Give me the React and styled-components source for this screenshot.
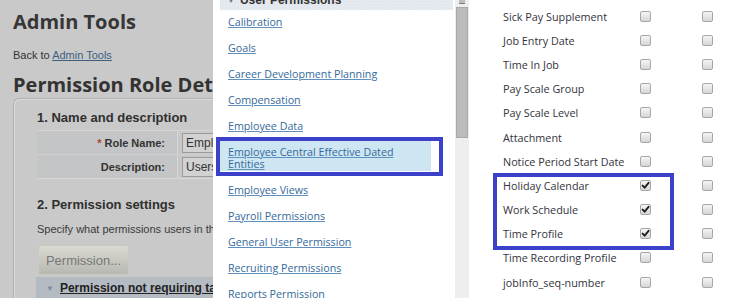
import React from "react";
import styled, { createGlobalStyle } from "styled-components";

const GlobalStyle = createGlobalStyle`
  html, body { margin: 0; padding: 0; }
  body { background: #fff; font-family: "Open Sans", "DejaVu Sans", sans-serif; }
  #root { width: 745px; height: 298px; }
`;

const Screen = styled.div`
  display: flex;
  width: 745px;
  height: 298px;
  overflow: hidden;
`;

/* ---------- dimmed page behind the dialog ---------- */
const Backdrop = styled.div`
  flex: 0 0 213px;
  box-sizing: border-box;
  padding: 12px 0 0 13px;
  background: #c9c9c9;
  color: #343434;
  overflow: hidden;
  white-space: nowrap;
`;

const PageTitle = styled.h1`
  margin: 0;
  font: 700 20px/20px "Open Sans", sans-serif;
  color: #363636;
`;

const BackLine = styled.div`
  margin-top: 17px;
  font: 11px/13px "Liberation Sans", Arial, sans-serif;
  color: #333;
`;

const BackLink = styled.a`
  color: #3d5f80;
  text-decoration: underline;
`;

const RoleTitle = styled.h2`
  margin: 12px 0 0;
  font: 700 20px/22px "Open Sans", sans-serif;
  color: #333;
`;

const Card = styled.div`
  margin-top: 2px;
  width: 260px;
  box-sizing: border-box;
  border: 1px solid #b2b2b2;
  border-right: none;
  border-radius: 6px 0 0 0;
  box-shadow: inset 1px 1px 0 #dadada;
  padding: 11px 0 0 23px;
`;

const StepTitle = styled.h3`
  margin: ${(p) => p.$gap || "0"} 0 0;
  font: 700 13px/16px "Liberation Sans", Arial, sans-serif;
  color: #2f2f2f;
`;

const FormTable = styled.div`
  margin-top: 4px;
  border-top: 1px solid #d4d4d4;
  border-bottom: 1px solid #d8d8d8;
`;

const FormRow = styled.div`
  display: grid;
  grid-template-columns: 141px 1fr;
  height: 23px;
  & + & { border-top: 1px solid #cfcfcf; }
`;

const FieldLabel = styled.div`
  display: flex;
  align-items: center;
  justify-content: flex-end;
  padding-right: 12px;
  font: 700 11px "Liberation Sans", Arial, sans-serif;
  color: #333;
  background-color: #c3c5c6;
  background-image: radial-gradient(#cbcdce 0.6px, transparent 0.7px);
  background-size: 2px 2px;
  border-right: 1px solid #d6d6d6;
`;

const Required = styled.span`
  color: #b04040;
  margin-right: 3px;
`;

const FieldCell = styled.div`
  display: flex;
  align-items: center;
  padding-left: 4px;
  background: #c6c8c9;
`;

const TextInput = styled.div`
  width: 80px;
  height: 20px;
  box-sizing: border-box;
  padding: 2px 0 0 3px;
  border: 1px solid #9c9c9c;
  background: #d2d2d2;
  font: 12px/15px "Liberation Sans", Arial, sans-serif;
  color: #333;
`;

const Hint = styled.p`
  margin: 10px 0 0;
  font: 11px/13px "Liberation Sans", Arial, sans-serif;
  color: #3a3a3a;
`;

const GhostButton = styled.div`
  margin: 9px 0 0 1px;
  width: 91px;
  height: 30px;
  box-sizing: border-box;
  display: flex;
  align-items: center;
  justify-content: center;
  border: 1px solid #c9c9bd;
  border-radius: 3px;
  background: linear-gradient(#dadad2, #b8b8b2);
  font: 13px "Liberation Sans", Arial, sans-serif;
  color: #777;
`;

const GroupBar = styled.div`
  margin: 2px 0 0 -1px;
  height: 22px;
  display: flex;
  align-items: center;
  gap: 6px;
  padding-left: 10px;
  background: #b4bbc2;
  font: 700 12px "Liberation Sans", Arial, sans-serif;
  color: #222;
`;

const Caret = styled.span`
  font-size: 8px;
  color: ${(p) => p.$color || "#7d8a96"};
`;

const BarLink = styled.span`
  text-decoration: underline;
`;

/* ---------- dialog: permission list ---------- */
const Dialog = styled.div`
  flex: 0 0 257px;
  display: flex;
  background: #fff;
`;

const ListPane = styled.div`
  flex: 1;
  min-width: 0;
  padding: 0 2px 0 7px;
  overflow: hidden;
`;

const ListHeader = styled.div`
  margin-top: -10px;
  height: 20px;
  display: flex;
  align-items: center;
  gap: 5px;
  padding-left: 7px;
  background-color: #e2e8ee;
  background-image: radial-gradient(#eaeff4 0.6px, transparent 0.7px);
  background-size: 3px 3px;
  font: 700 12px "Liberation Sans", Arial, sans-serif;
  color: #333;
`;

const LinkList = styled.ul`
  list-style: none;
  margin: 0;
  padding: 0;
`;

const LinkItem = styled.li`
  position: relative;
  padding: ${(p) => (p.$active ? "6px 8px 1px 8px" : "6px 0 8px 8px")};
  margin: ${(p) => (p.$active ? "0 22px 7px 0" : "0")};
  background: ${(p) => (p.$active ? "#cde6f2" : "transparent")};
  font: 10.7px/12px "Open Sans", sans-serif;
`;

const PermLink = styled.a`
  color: #35699b;
  text-decoration: underline;
  text-decoration-color: #5f8fbd;
  text-underline-offset: 1px;
`;

const Frame = styled.div`
  position: absolute;
  box-sizing: border-box;
  inset: ${(p) => p.$inset};
  width: ${(p) => p.$width || "auto"};
  border: 4px solid #3b41c9;
  pointer-events: none;
`;

const Scrollbar = styled.div`
  flex: 0 0 14px;
  margin-right: 1px;
  display: flex;
  flex-direction: column;
  background: #eeeeee;
`;

const ScrollArrow = styled.div`
  height: 3px;
  margin: 0 4px;
  background: #bdbdbd;
  border-bottom: 1px solid #7a7a7a;
`;

const ScrollThumb = styled.div`
  margin: 3px 1px 0;
  height: 131px;
  box-sizing: border-box;
  background: #bcbcbc;
  border: 1px solid #a9a9a9;
`;

/* ---------- dialog: field permissions ---------- */
const FieldPanel = styled.div`
  flex: 1;
  background: #fff;
  padding: 4px 0 0 33px;
  overflow: hidden;
`;

const FieldRow = styled.div`
  display: grid;
  grid-template-columns: 137px 62px 12px;
  align-items: center;
  height: 24.2px;
  font: 10.8px "Open Sans", sans-serif;
  color: #33333d;
  white-space: nowrap;
`;

const Group = styled.div`
  position: relative;
`;

const Box = styled.span`
  width: 11px;
  height: 11px;
  box-sizing: border-box;
  display: flex;
  align-items: center;
  justify-content: center;
  border: 1px solid #a7a7a7;
  border-radius: 2px;
  background: linear-gradient(#f5f5f5, #d6d6d6);
`;

function Checkbox({ checked }) {
  return (
    <Box>
      {checked && (
        <svg width="9" height="9" viewBox="0 0 9 9">
          <path d="M1.6 4.6 L3.6 6.7 L7.6 1.8" fill="none" stroke="#1f1f1f" strokeWidth="1.9" strokeLinecap="round" strokeLinejoin="round" />
        </svg>
      )}
    </Box>
  );
}

const links = [
  "Calibration",
  "Goals",
  "Career Development Planning",
  "Compensation",
  "Employee Data",
  "Employee Central Effective Dated Entities",
  "Employee Views",
  "Payroll Permissions",
  "General User Permission",
  "Recruiting Permissions",
  "Reports Permission",
];

const fieldsBefore = [
  "Sick Pay Supplement",
  "Job Entry Date",
  "Time In Job",
  "Pay Scale Group",
  "Pay Scale Level",
  "Attachment",
  "Notice Period Start Date",
];
const fieldsChecked = ["Holiday Calendar", "Work Schedule", "Time Profile"];
const fieldsAfter = ["Time Recording Profile", "jobInfo_seq-number"];

function Field({ label, checked }) {
  return (
    <FieldRow>
      <span>{label}</span>
      <Checkbox checked={checked} />
      <Checkbox />
    </FieldRow>
  );
}

export default function App() {
  return (
    <>
      <GlobalStyle />
      <Screen>
        <Backdrop>
          <PageTitle>Admin Tools</PageTitle>
          <BackLine>
            Back to <BackLink>Admin Tools</BackLink>
          </BackLine>
          <RoleTitle>Permission Role Details</RoleTitle>
          <Card>
            <StepTitle>1. Name and description</StepTitle>
            <FormTable>
              <FormRow>
                <FieldLabel>
                  <Required>*</Required>Role Name:
                </FieldLabel>
                <FieldCell>
                  <TextInput>Employee</TextInput>
                </FieldCell>
              </FormRow>
              <FormRow>
                <FieldLabel>Description:</FieldLabel>
                <FieldCell>
                  <TextInput>Users</TextInput>
                </FieldCell>
              </FormRow>
            </FormTable>
            <StepTitle $gap="18px">2. Permission settings</StepTitle>
            <Hint>Specify what permissions users in this role should have.</Hint>
            <GhostButton>Permission...</GhostButton>
            <GroupBar>
              <Caret>▼</Caret>
              <BarLink>Permission not requiring target</BarLink>
            </GroupBar>
          </Card>
        </Backdrop>

        <Dialog>
          <ListPane>
            <ListHeader>
              <Caret $color="#777">▼</Caret>
              User Permissions
            </ListHeader>
            <LinkList>
              {links.map((l, i) => (
                <LinkItem key={l} $active={i === 5}>
                  <PermLink>{l}</PermLink>
                  {i === 5 && <Frame $inset="-3px -12px -5px -4px" />}
                </LinkItem>
              ))}
            </LinkList>
          </ListPane>
          <Scrollbar>
            <ScrollArrow />
            <ScrollThumb />
          </Scrollbar>
        </Dialog>

        <FieldPanel>
          {fieldsBefore.map((f) => (
            <Field key={f} label={f} />
          ))}
          <Group>
            {fieldsChecked.map((f) => (
              <Field key={f} label={f} checked />
            ))}
            <Frame $inset="0 auto -4px -10px" $width="181px" />
          </Group>
          {fieldsAfter.map((f) => (
            <Field key={f} label={f} />
          ))}
        </FieldPanel>
      </Screen>
    </>
  );
}
